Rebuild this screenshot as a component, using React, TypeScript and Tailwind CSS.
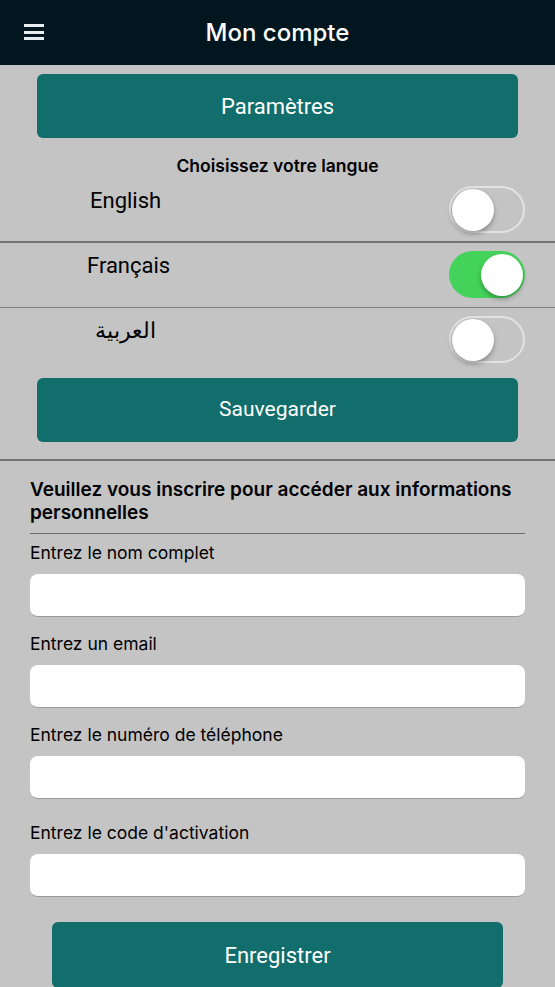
import React, { useState } from "react";

const Toggle: React.FC<{ on: boolean; onChange: () => void }> = ({ on, onChange }) => {
  return (
    <button
      onClick={onChange}
      className={`relative w-[76px] h-[47px] rounded-full shrink-0 ${
        on ? "bg-[#44d35a]" : "bg-[#c4c4c4] border-2 border-[#e2e2e2]"
      }`}
    >
      <span
        className={`absolute top-1/2 -translate-y-1/2 w-[42px] h-[42px] rounded-full bg-white shadow-[0_3px_5px_rgba(0,0,0,0.3)] ${
          on ? "right-[2px]" : "left-[1px]"
        }`}
      />
    </button>
  );
};

const Field: React.FC<{ label: string; gap?: string }> = ({ label, gap = "mt-[17px]" }) => (
  <div className={gap}>
    <label className="block text-[17.5px] leading-[20px] text-black">{label}</label>
    <input className="mt-[11px] w-full h-[43px] rounded-[8px] bg-white border-b border-[#9a9a9a] outline-none px-3" />
  </div>
);

export default function App() {
  const [lang, setLang] = useState("fr");

  const langs = [
    { id: "en", name: "English", pad: "pl-[90px]", border: "border-b-2 border-[#737373]" },
    { id: "fr", name: "Français", pad: "pl-[87px]", border: "border-b border-[#808080]" },
    { id: "ar", name: "العربية", pad: "pl-[95px]", border: "" },
  ];

  return (
    <div className="w-[555px] h-[987px] overflow-hidden bg-[#c4c4c4] font-['Inter','Liberation_Sans',sans-serif]">
      {/* Header */}
      <header className="relative h-[65px] bg-[#021620] flex items-center justify-center">
        <button className="absolute left-[24px] top-[24px] flex flex-col gap-[3.5px]">
          <span className="block w-[20px] h-[3px] bg-[#e6ecf0]" />
          <span className="block w-[20px] h-[3px] bg-[#e6ecf0]" />
          <span className="block w-[20px] h-[3px] bg-[#e6ecf0]" />
        </button>
        <h1 className="text-white text-[24px] font-medium">Mon compte</h1>
      </header>

      {/* Settings */}
      <div className="px-[37px] pt-[9px]">
        <button className="w-full h-[64px] rounded-[6px] bg-[#116e6c] text-white text-[22px] font-['Roboto',sans-serif]">
          Paramètres
        </button>
        <p className="mt-[16px] text-center text-[17.5px] font-semibold text-black leading-[24px]">
          Choisissez votre langue
        </p>
      </div>

      <div>
        {langs.map((l) => (
          <div key={l.id} className={`h-[65px] flex justify-between pr-[30px] ${l.border}`}>
            <span className={`${l.pad} pt-[8px] text-[22px] text-black leading-[30px] font-['Roboto','Noto_Sans',sans-serif]`}>
              {l.name}
            </span>
            <div className="pt-[8px]">
              <Toggle on={lang === l.id} onChange={() => setLang(l.id)} />
            </div>
          </div>
        ))}
      </div>

      <div className="px-[37px] mt-[5px] pb-[17px] border-b-2 border-[#737373]">
        <button className="w-full h-[64px] rounded-[6px] bg-[#116e6c] text-white text-[21px] font-['Roboto',sans-serif]">
          Sauvegarder
        </button>
      </div>

      {/* Register form */}
      <div className="px-[30px] pt-[17px]">
        <h2 className="text-[19px] font-semibold leading-[23px] text-black pb-[9px] border-b border-[#6e6e6e]">
          Veuillez vous inscrire pour accéder aux informations personnelles
        </h2>
        <Field label="Entrez le nom complet" gap="mt-[9px]" />
        <Field label="Entrez un email" />
        <Field label="Entrez le numéro de téléphone" />
        <Field label="Entrez le code d'activation" gap="mt-[24px]" />
        <div className="px-[22px] mt-[25px]">
          <button className="w-full h-[66px] rounded-[6px] bg-[#116e6c] text-white text-[22px] font-['Roboto',sans-serif]">
            Enregistrer
          </button>
        </div>
      </div>
    </div>
  );
}
